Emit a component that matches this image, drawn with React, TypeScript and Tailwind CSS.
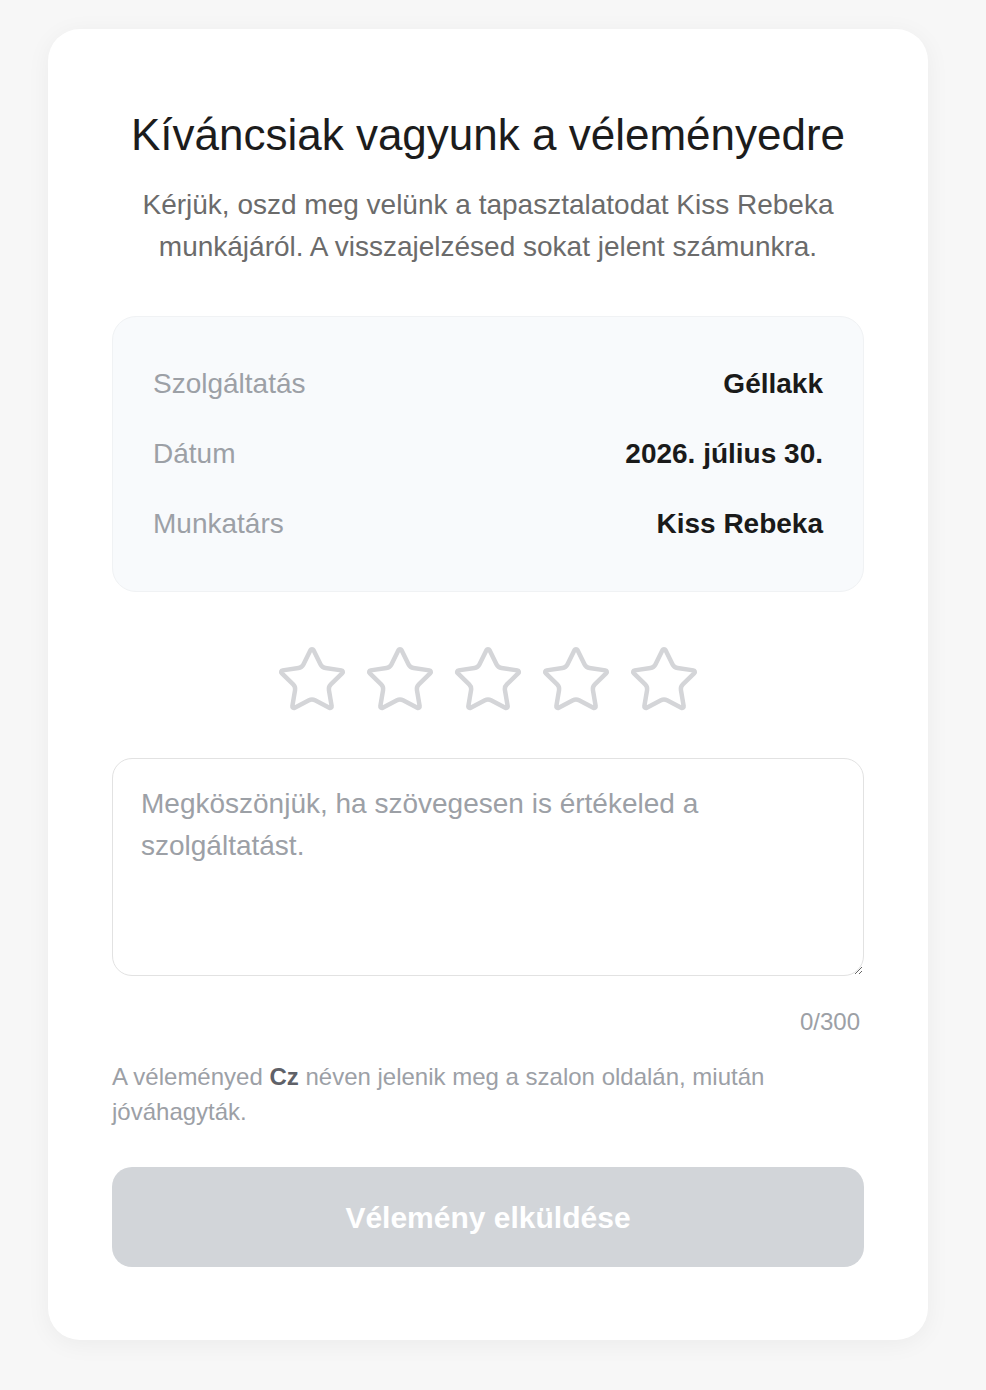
import React, { useState } from 'react';
import { Star } from 'lucide-react';

const rows = [
    { label: 'Szolgáltatás', value: 'Géllakk' },
    { label: 'Dátum', value: '2026. július 30.' },
    { label: 'Munkatárs', value: 'Kiss Rebeka' },
];

export default function App() {
    const [comment, setComment] = useState<string>('');

    return (
        <div className="min-h-[1390px] bg-[#f7f7f7] pl-12 pt-[29px] pb-[52px] font-['Liberation_Sans',Arial,sans-serif]">
            <div className="w-[880px] rounded-[32px] bg-white px-16 pt-[82px] pb-[73px] shadow-[0_4px_24px_rgba(0,0,0,0.05)]">
                <h1 className="text-center text-[44px] leading-[48px] text-[#1c1c1c]">Kíváncsiak vagyunk a véleményedre</h1>
                <p className="mx-auto mt-[25px] max-w-[740px] text-center text-[28px] leading-[42px] text-[#6b6b6b]">
                    Kérjük, oszd meg velünk a tapasztalatodat Kiss Rebeka munkájáról. A visszajelzésed sokat jelent számunkra.
                </p>

                <div className="mt-[48px] flex flex-col gap-[40px] rounded-[24px] border border-[#f0f2f4] bg-[#f8fafc] px-10 py-[52px]">
                    {rows.map((row) => (
                        <div key={row.label} className="flex items-center justify-between text-[28px] leading-[30px]">
                            <span className="text-[#9ca0a6]">{row.label}</span>
                            <span className="font-bold text-[#1a1a1a]">{row.value}</span>
                        </div>
                    ))}
                </div>

                <div className="mt-[51px] flex justify-center gap-[14px]">
                    {[1, 2, 3, 4, 5].map((n) => (
                        <button key={n} type="button" aria-label={`${n} csillag`}>
                            <Star size={74} strokeWidth={1.45} color="#d4d5d8" />
                        </button>
                    ))}
                </div>

                <textarea
                    value={comment}
                    maxLength={300}
                    onChange={(e) => setComment(e.target.value)}
                    placeholder="Megköszönjük, ha szövegesen is értékeled a szolgáltatást."
                    className="mt-[41px] block h-[218px] w-full rounded-[20px] border border-[#e2e2e2] px-[28px] py-[24px] text-[28px] leading-[42px] text-[#1a1a1a] outline-none placeholder:text-[#9ca0a6]"
                />
                <div className="mt-[31px] pr-[4px] text-right text-[24px] leading-[30px] text-[#9ca0a6]">{comment.length}/300</div>

                <p className="mt-[22px] text-[24px] leading-[35px] text-[#9ca0a6]">
                    A véleményed <b className="text-[#5f6168]">Cz</b> néven jelenik meg a szalon oldalán, miután jóváhagyták.
                </p>

                <button type="button" disabled className="mt-[38px] h-[100px] w-full rounded-[20px] bg-[#d2d5d9] text-[30px] font-bold text-white">
                    Vélemény elküldése
                </button>
            </div>
        </div>
    );
}
